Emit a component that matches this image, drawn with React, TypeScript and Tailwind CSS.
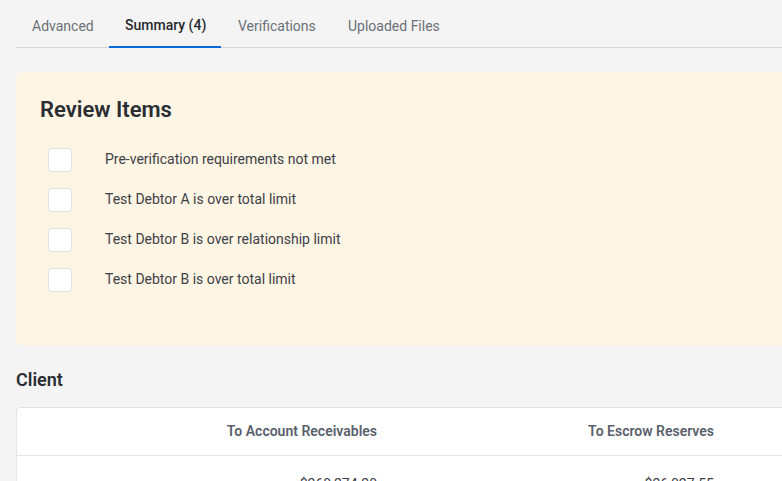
const REVIEW_ITEMS = [
  "Pre-verification requirements not met",
  "Test Debtor A is over total limit",
  "Test Debtor B is over relationship limit",
  "Test Debtor B is over total limit",
];

const TABS = [
  { label: "Advanced", active: false, box: "w-[93px] pl-4" },
  { label: "Summary (4)", active: true, box: "w-[112px] pl-4" },
  { label: "Verifications", active: false, box: "w-[110px] pl-[17px]" },
  { label: "Uploaded Files", active: false, box: "w-[124px] pl-[17px]" },
];

export default function App() {
  return (
    <div className="h-[481px] w-[782px] overflow-hidden bg-[#f4f4f4] pl-4 font-['Roboto',sans-serif]">
      <div className="w-[900px]">
        {/* Tabs */}
        <div className="flex h-12 border-b border-[#d5d6da]">
          {TABS.map(tab => (
            <div
              key={tab.label}
              className={`-mb-px flex h-12 ${tab.box} items-center pt-1 text-sm ${
                tab.active
                  ? "border-b-2 border-[#0a6bd8] font-medium text-[#25282d]"
                  : "text-[#6b7078]"
              }`}
            >
              {tab.label}
            </div>
          ))}
        </div>

        {/* Review items */}
        <div className="mt-6 h-[274px] rounded-lg bg-[#fef5e5] px-6 pt-6">
          <h2 className="text-[22px] leading-7 font-semibold text-[#2a2d32]">Review Items</h2>
          <div className="mt-4">
            {REVIEW_ITEMS.map(item => (
              <div key={item} className="flex h-10 items-center pl-2">
                <div className="h-6 w-6 rounded border border-[#dfe1e5] bg-white" />
                <span className="mb-[3px] ml-[33px] text-sm text-[#3d4046]">{item}</span>
              </div>
            ))}
          </div>
        </div>

        {/* Client */}
        <h3 className="mt-[22px] text-lg leading-6 font-semibold text-[#2a2d32]">Client</h3>
        <div className="mt-[15px] rounded-t border border-[#e2e3e6] bg-white">
          <div className="flex h-12 items-center border-b border-[#e2e3e6] pb-0.5 text-sm font-semibold text-[#59616c]">
            <div className="w-[360px] text-right">To Account Receivables</div>
            <div className="w-[337px] text-right">To Escrow Reserves</div>
          </div>
          <div className="flex h-12 items-start pt-[18px] text-sm text-[#3d4046]">
            <div className="w-[360px] text-right">$260,274.20</div>
            <div className="w-[337px] text-right">$26,027.55</div>
          </div>
        </div>
      </div>
    </div>
  );
}
